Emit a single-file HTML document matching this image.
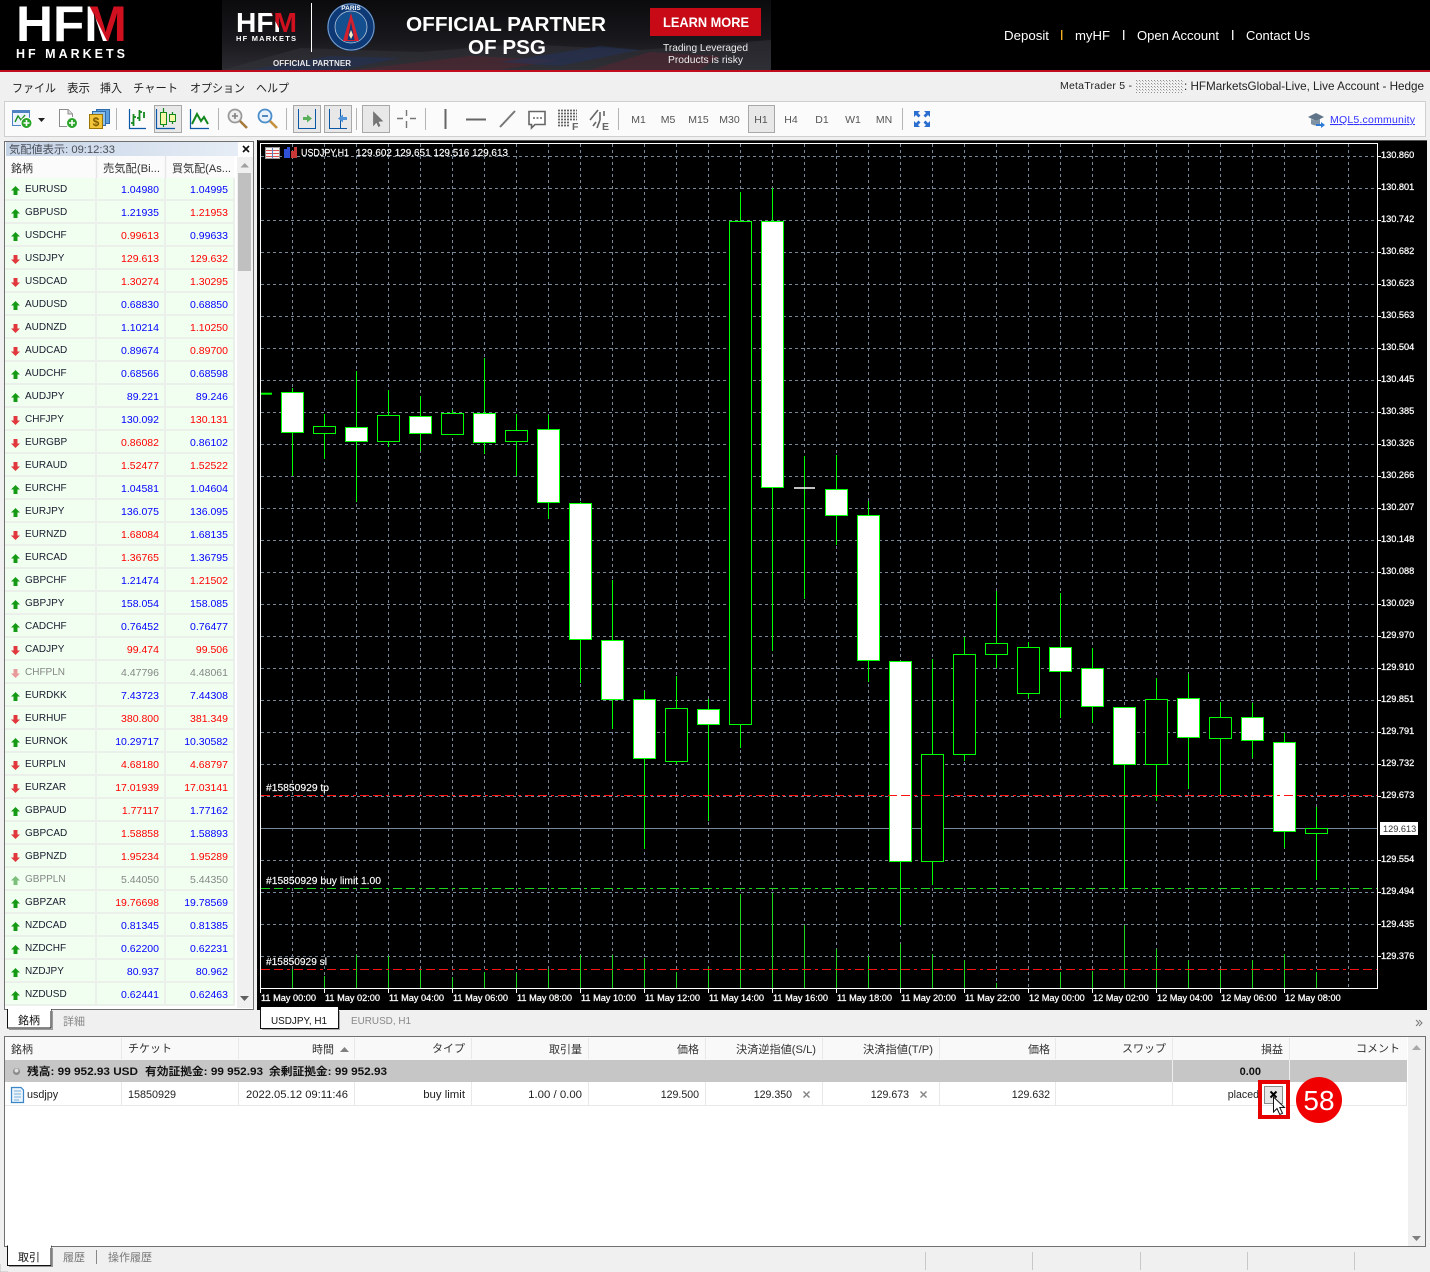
<!DOCTYPE html>
<html lang="ja"><head><meta charset="utf-8"><title>MetaTrader 5 WebTerminal</title>
<style>
html,body{margin:0;padding:0;background:#f0f0f0;width:1430px;height:1272px;overflow:hidden}
svg{position:absolute;left:0;top:0;display:block}
text{font-family:"Liberation Sans","Noto Sans CJK JP",sans-serif}
.nav{fill:#fff;font-size:13.3px}
.menu{fill:#222;font-size:11.5px}
.tf{fill:#555;font-size:10.5px;text-anchor:middle}
.px text{fill:#fff;font-size:9.2px;stroke:#fff;stroke-width:.25}
.px text.lb{font-size:10.3px;stroke-width:.15}
.hd{fill:#333;font-size:11px;text-anchor:end}
.rw{fill:#222;font-size:10.6px;text-anchor:end}
.w{fill:#fff;stroke:#0f0;stroke-width:1}
.b{fill:#000;stroke:#0f0;stroke-width:1}
#q{position:absolute;left:5px;top:178px;width:229px;border-collapse:collapse;table-layout:fixed;font:10.5px "Liberation Sans",sans-serif}
#q td{height:18px;padding:3px 5px 0 0;background:#f0fff0;border-bottom:2px solid #ebf0eb;border-right:2px solid #ebf0eb;text-align:right;white-space:nowrap;line-height:18px}
#q td:first-child{text-align:left;color:#1a1a2e;font-size:10px;padding-left:20px;position:relative}
#q i{position:absolute;left:6px;top:8px;width:9px;height:9px}
#q i.u{background:#149a14;clip-path:polygon(50% 0,100% 50%,72% 50%,72% 100%,28% 100%,28% 50%,0 50%)}
#q i.d{background:#e0383c;clip-path:polygon(28% 0,72% 0,72% 50%,100% 50%,50% 100%,0 50%,28% 50%)}
#q i.lu{background:#7bbf7b;clip-path:polygon(50% 0,100% 50%,72% 50%,72% 100%,28% 100%,28% 50%,0 50%)}
#q i.ld{background:#e89a9a;clip-path:polygon(28% 0,72% 0,72% 50%,100% 50%,50% 100%,0 50%,28% 50%)}
.B{color:#00f}.R{color:#f00}.G{color:#868686}
#q tr.g td:first-child{color:#868686}
</style></head><body>
<svg width="1430" height="1272" viewBox="0 0 1430 1272" xmlns="http://www.w3.org/2000/svg">
<defs>
<linearGradient id="lg" gradientUnits="userSpaceOnUse" x1="92" y1="26" x2="104" y2="20"><stop offset=".5" stop-color="#fff"/><stop offset=".5" stop-color="#d0101f"/></linearGradient>
<linearGradient id="lg2" gradientUnits="userSpaceOnUse" x1="273" y1="24" x2="279" y2="21"><stop offset=".5" stop-color="#fff"/><stop offset=".5" stop-color="#d0101f"/></linearGradient>
<linearGradient id="bn" x1="0" y1="0" x2="0" y2="1"><stop offset="0" stop-color="#0b0b0d"/><stop offset=".55" stop-color="#18181c"/><stop offset="1" stop-color="#2a2a30"/></linearGradient>
<linearGradient id="tb" x1="0" y1="0" x2="1" y2="0"><stop offset="0" stop-color="#c5d3e6"/><stop offset="1" stop-color="#e6edf6"/></linearGradient>
<pattern id="dot" width="3" height="3" patternUnits="userSpaceOnUse"><rect width="3" height="3" fill="#f2f2f2"/><rect width="1" height="1" fill="#bdbdbd"/><rect x="2" y="2" width="1" height="1" fill="#8f8f8f"/></pattern>
</defs>

<!-- header -->
<rect width="1430" height="70" fill="#000"/>
<rect y="70" width="1430" height="2" fill="#c00c1c"/>
<text x="16" y="41" font-size="50" font-weight="700" fill="url(#lg)" textLength="111" lengthAdjust="spacingAndGlyphs">HFM</text>
<text x="16" y="58" font-size="12.5" font-weight="700" fill="#fff" textLength="109">HF MARKETS</text>

<!-- banner -->
<rect x="222" width="549" height="70" fill="url(#bn)"/>
<path d="M222 70L300 48 420 52 520 44 640 50 771 40V70Z" fill="#34343c" opacity=".5"/>
<path d="M352 70L470 56 560 60 500 70ZM590 70L650 52 720 56 700 70Z" fill="#5a2430" opacity=".5"/>
<path d="M250 70L330 56 400 58 340 70ZM500 62L600 46 640 50 560 66Z" fill="#23335a" opacity=".55"/>
<text x="236" y="32" font-size="28" font-weight="700" fill="url(#lg2)" textLength="61" lengthAdjust="spacingAndGlyphs">HFM</text>
<text x="236" y="41" font-size="7.5" font-weight="700" fill="#fff" textLength="60">HF MARKETS</text>
<rect x="311" y="3" width="1" height="49" fill="#fff"/>
<circle cx="351" cy="27" r="24" fill="#0d3a76"/><circle cx="351" cy="27" r="23" fill="none" stroke="#7fa0c8" stroke-width="1"/><circle cx="351" cy="27" r="16" fill="#14508f" stroke="#c8d4e4" stroke-width=".7"/>
<path d="M351 13L343 41H359Z" fill="#d2202f"/>
<path d="M351 22L347.500 40H354.500Z" fill="#0d3a76"/><path d="M351 30l2 5-2 4-2-4Z" fill="#f3e9c6"/>
<text x="351" y="10" font-size="6.500" font-weight="700" fill="#fff" text-anchor="middle">PARIS</text>
<text x="312" y="66" font-size="8" font-weight="700" fill="#e8e8e8" text-anchor="middle" textLength="78">OFFICIAL PARTNER</text>
<text x="406" y="31" font-size="20" font-weight="700" fill="#fff" textLength="200" lengthAdjust="spacingAndGlyphs">OFFICIAL PARTNER</text>
<text x="468" y="54" font-size="20" font-weight="700" fill="#fff" textLength="78" lengthAdjust="spacingAndGlyphs">OF PSG</text>
<rect x="650" y="8" width="111" height="28" fill="#c80a17"/>
<text x="663" y="27" font-size="14" font-weight="700" fill="#fff" textLength="86" lengthAdjust="spacingAndGlyphs">LEARN MORE</text>
<text x="663" y="51" font-size="10.5" fill="#eee" textLength="85" lengthAdjust="spacingAndGlyphs">Trading Leveraged</text>
<text x="668" y="63" font-size="10.5" fill="#eee" textLength="75" lengthAdjust="spacingAndGlyphs">Products is risky</text>

<text x="1004" y="40" class="nav" textLength="45" lengthAdjust="spacingAndGlyphs">Deposit</text>
<rect x="1061" y="30" width="1.4" height="10" fill="#f0b020"/>
<text x="1075" y="40" class="nav" textLength="35" lengthAdjust="spacingAndGlyphs">myHF</text>
<rect x="1123" y="30" width="1.4" height="10" fill="#eee"/>
<text x="1137" y="40" class="nav" textLength="82" lengthAdjust="spacingAndGlyphs">Open Account</text>
<rect x="1232" y="30" width="1.4" height="10" fill="#eee"/>
<text x="1246" y="40" class="nav" textLength="64" lengthAdjust="spacingAndGlyphs">Contact Us</text>

<!-- menu -->
<text x="12" y="92" class="menu" textLength="44" lengthAdjust="spacingAndGlyphs">ファイル</text>
<text x="67" y="92" class="menu" textLength="23" lengthAdjust="spacingAndGlyphs">表示</text>
<text x="100" y="92" class="menu" textLength="22" lengthAdjust="spacingAndGlyphs">挿入</text>
<text x="133" y="92" class="menu" textLength="45" lengthAdjust="spacingAndGlyphs">チャート</text>
<text x="190" y="92" class="menu" textLength="55" lengthAdjust="spacingAndGlyphs">オプション</text>
<text x="256" y="92" class="menu" textLength="33" lengthAdjust="spacingAndGlyphs">ヘルプ</text>
<text x="1060" y="89" font-size="10.5" fill="#222" textLength="72">MetaTrader 5 -</text>
<rect x="1135" y="79" width="48" height="14" fill="url(#dot)"/>
<text x="1184" y="90" font-size="12" fill="#222" textLength="240" lengthAdjust="spacingAndGlyphs">: HFMarketsGlobal-Live, Live Account - Hedge</text>

<!-- toolbar -->
<rect x="4.5" y="101.5" width="1421" height="35" fill="#fbfbfb" stroke="#cfcfcf"/>
<g fill="#e8e8e8" stroke="#a8a8a8"><rect x="154.5" y="105.5" width="27" height="27"/><rect x="293.5" y="105.5" width="27" height="27"/><rect x="324.5" y="105.5" width="27" height="27"/><rect x="362.5" y="105.5" width="27" height="27"/><rect x="748.5" y="105.5" width="26" height="27"/></g>
<path d="M116.5 108V130M218.5 108V130M286.5 108V130M356.5 108V130M425.5 108V130M618.5 108V130M902.5 108V130" stroke="#b4b4b4"/>
<!-- new chart -->
<rect x="12.5" y="110.5" width="17" height="15" fill="#eef4ff" stroke="#4f82c2"/><rect x="12" y="110" width="18" height="3" fill="#4f82c2"/>
<path d="M15 122L18 116 21 120 25 115" fill="none" stroke="#1f8f1f" stroke-width="1.4"/>
<circle cx="26.5" cy="123" r="5.5" fill="#2aa52a" stroke="#fff"/><path d="M26.5 120V126M23.5 123H29.5" stroke="#fff" stroke-width="1.6"/>
<path d="M38 118H45L41.5 122Z" fill="#222"/>
<!-- new order -->
<path d="M59.5 109.5H68L72.5 114V126.5H59.5Z" fill="#fff" stroke="#8c8c8c"/><path d="M68 109.5V114H72.5" fill="#ddd" stroke="#8c8c8c"/>
<circle cx="72" cy="123" r="5.5" fill="#2aa52a" stroke="#fff"/><path d="M72 120V126M69 123H75" stroke="#fff" stroke-width="1.6"/>
<!-- dollar -->
<rect x="96.5" y="109.5" width="13" height="14" fill="#5f9fdc" stroke="#2e6cab"/><rect x="92.5" y="111.5" width="13" height="14" fill="#8fc1ea" stroke="#2e6cab"/>
<rect x="89.5" y="114.5" width="13" height="14" fill="#f2c53a" stroke="#9c7400"/><text x="96" y="126" font-size="12" font-weight="700" fill="#805c00" text-anchor="middle">$</text>
<!-- chart types -->
<g fill="none">
<path d="M129.5 109V128.5H146" stroke="#0a57a8" stroke-width="1.2"/>
<path d="M133.5 114V126M131 123H133.5M133.5 117H136M139.5 110V121M137 118H139.5M139.5 112H142M144 112V118" stroke="#12881d" stroke-width="1.8"/>
<path d="M156.5 109V128.5H175" stroke="#0a57a8" stroke-width="1.2"/>
<path d="M163.5 108V127M172.5 112V124" stroke="#12881d" stroke-width="1.2"/>
<rect x="160.5" y="112.5" width="6" height="12" fill="#f6f6a8" stroke="#12881d"/><rect x="169.5" y="114.5" width="6" height="7" fill="#f6f6a8" stroke="#12881d"/>
<path d="M190.5 109V128.5H209" stroke="#0a57a8" stroke-width="1.2"/>
<path d="M192 124L197 114 201 121 204 117 208 124" stroke="#12881d" stroke-width="2"/>
</g>
<!-- zoom -->
<circle cx="235" cy="116" r="6.5" fill="#f0f0f0" stroke="#9a9a9a" stroke-width="1.8"/><path d="M232 116H238M235 113V119" stroke="#808080" stroke-width="1.6"/><path d="M240 121L247 128" stroke="#a77b3c" stroke-width="2.6"/>
<circle cx="265" cy="116" r="6.5" fill="#eaf3fc" stroke="#4b8dcb" stroke-width="1.8"/><path d="M262 116H268" stroke="#2c6db0" stroke-width="1.6"/><path d="M270 121L277 128" stroke="#c4913f" stroke-width="2.6"/>
<!-- shift -->
<g fill="none" stroke="#0a57a8" stroke-width="1"><path d="M298.5 109V128.5H316"/><path d="M315.5 109V128"/><path d="M329.5 109V128.5H347"/><path d="M340.5 109V128"/></g>
<path d="M303 117H307V114.500L312 118.500 307 122.500V120H303Z" fill="#5ab05a"/>
<path d="M347 117H343V114.500L338 118.500 343 122.500V120H347Z" fill="#4f92d8"/>
<!-- cursor tools -->
<path d="M373.5 112V125.500L376.500 122 378.500 126.500 380 125.800 378 121.500 382.500 121Z" fill="#777" stroke="#666" stroke-width=".6"/>
<path d="M406.5 110V116M406.5 121V128M397 118.5H403M410 118.5H416" stroke="#777" stroke-width="1.4"/>
<path d="M445.5 109V129" stroke="#666" stroke-width="2"/>
<path d="M466 119.5H486" stroke="#666" stroke-width="2"/>
<path d="M500 127L515 111" stroke="#777" stroke-width="2"/>
<path d="M529 111.5H545V124.5H535L531.5 128V124.5H529Z" fill="#fff" stroke="#666" stroke-width="1.6"/><path d="M533 118H535M536.5 118H538.5M540 118H542" stroke="#666" stroke-width="1.6"/>
<path d="M558 110.5H577M558 113.5H577M558 116.5H577M558 119.5H577M558 122.500H570M558 125.5H570" stroke="#666" stroke-width="1.8" stroke-dasharray="2 1"/>
<text x="572" y="130" font-size="10.500" font-weight="700" fill="#666">F</text>
<path d="M590 120L598 110M593 126L596 122M600 112V120M604 111V116M600 120L597 128" stroke="#666" stroke-width="1.6" fill="none"/>
<text x="602" y="130" font-size="10.500" font-weight="700" fill="#666">E</text>
<!-- timeframes -->
<text x="638.5" y="123" class="tf">M1</text><text x="668" y="123" class="tf">M5</text><text x="698.5" y="123" class="tf">M15</text><text x="729.5" y="123" class="tf">M30</text><text x="761" y="123" class="tf">H1</text><text x="791" y="123" class="tf">H4</text><text x="822" y="123" class="tf">D1</text><text x="853" y="123" class="tf">W1</text><text x="884" y="123" class="tf">MN</text>
<path d="M914 111H920L918 113 920.5 115.5 918.5 117.5 916 115 914 117ZM930 111H924L926 113 923.5 115.5 925.5 117.5 928 115 930 117ZM914 127H920L918 125 920.5 122.5 918.5 120.5 916 123 914 121ZM930 127H924L926 125 923.5 122.5 925.5 120.5 928 123 930 121Z" fill="#2a6fd0"/>
<!-- mql5 -->
<path d="M1308 117L1316 113 1324 117 1316 121Z" fill="#5f7488"/><path d="M1311 119V124C1314 126 1318 126 1320 124V119L1316 121Z" fill="#8093a5"/>
<path d="M1316 124H1321V122L1325 125 1321 128V126H1316Z" fill="#2a7ad6"/>
<text x="1330" y="123" font-size="10.5" fill="#3232ff" text-decoration="underline" textLength="85">MQL5.community</text>

<!-- symbols panel -->
<rect x="4.5" y="141.5" width="249" height="868" fill="#fff" stroke="#707070"/>
<rect x="6" y="142" width="232" height="14" fill="url(#tb)"/>
<text x="9" y="153" font-size="11" fill="#4a4f58" textLength="106" lengthAdjust="spacingAndGlyphs">気配値表示: 09:12:33</text>
<path d="M243 146L249 152M249 146L243 152" stroke="#111" stroke-width="1.6"/>
<rect x="5" y="156" width="229" height="22" fill="#fbfbfb"/>
<path d="M96.5 156V178M165.5 156V178" stroke="#e6e6e6" stroke-width="1.4"/>
<text x="11" y="172" font-size="11" fill="#333">銘柄</text>
<text x="103" y="172" font-size="11" fill="#333" textLength="57" lengthAdjust="spacingAndGlyphs">売気配(Bi...</text>
<text x="172" y="172" font-size="11" fill="#333" textLength="59" lengthAdjust="spacingAndGlyphs">買気配(As...</text>
<rect x="237" y="157" width="16" height="851" fill="#f0f0f0"/>
<rect x="238" y="173" width="13" height="98" fill="#c0c0c0"/>
<path d="M240.500 167.500H249L244.750 163Z" fill="#a0a0a0"/>
<path d="M240 996H249L244.500 1001Z" fill="#606060"/>

<!-- tabs under panels -->
<rect x="7.500" y="1009.500" width="43.500" height="18.500" fill="#fff" stroke="#111"/><rect x="8" y="1008" width="43" height="3" fill="#fff"/><path d="M9 1029.500H52.500V1011" stroke="#999" fill="none"/>
<text x="18" y="1024" font-size="11" fill="#111">銘柄</text>
<text x="63" y="1025" font-size="11" fill="#888">詳細</text>

<!-- chart -->
<rect x="257" y="140" width="1170" height="870" fill="#000"/>
<path d="M258 140.500H1427" stroke="#555"/>
<g fill="none" stroke="#778899" stroke-dasharray="3 3">
<path d="M261 156.500H1377M261 188.500H1377M261 220.500H1377M261 252.500H1377M261 284.500H1377M261 316.500H1377M261 348.500H1377M261 380.500H1377M261 412.500H1377M261 444.500H1377M261 476.500H1377M261 508.500H1377M261 540.500H1377M261 572.500H1377M261 604.500H1377M261 636.500H1377M261 668.500H1377M261 700.500H1377M261 732.500H1377M261 764.500H1377M261 796.500H1377M261 860.500H1377M261 892.500H1377M261 924.500H1377M261 956.500H1377"/>
<path d="M292.500 144V988M324.500 144V988M356.500 144V988M388.500 144V988M420.500 144V988M452.500 144V988M484.500 144V988M516.500 144V988M548.500 144V988M580.500 144V988M612.500 144V988M644.500 144V988M676.500 144V988M708.500 144V988M740.500 144V988M772.500 144V988M804.500 144V988M836.500 144V988M868.500 144V988M900.500 144V988M932.500 144V988M964.500 144V988M996.500 144V988M1028.500 144V988M1060.500 144V988M1092.500 144V988M1124.500 144V988M1156.500 144V988M1188.500 144V988M1220.500 144V988M1252.500 144V988M1284.500 144V988M1316.500 144V988M1348.500 144V988"/>
</g>
<path d="M261 828.500H1378" stroke="#778899"/>
<!-- stubs -->
<path d="M292.500 969V988M324.500 976V988M356.500 955V988M388.500 956V988M420.500 969V988M452.500 977V988M484.500 972V988M516.500 973V988M548.500 969V988M580.500 955V988M612.500 955V988M644.500 958V988M676.500 972V988M708.500 967V988M740.500 894V988M772.500 893V988M804.500 925V988M836.500 949V988M868.500 956V988M900.500 944V988M932.500 954V988M964.500 960V988M996.500 983V988M1060.500 972V988M1092.500 971V988M1124.500 925V988M1156.500 949V988M1188.500 960V988M1220.500 970V988M1252.500 960V988M1284.500 954V988M1316.500 972V988" stroke="#1fd61f"/>
<!-- wicks -->
<path d="M292.500 388V476M324.500 414V459M356.500 371V502M388.500 390V447M420.500 396V451M452.500 410V434M484.500 358V454M516.500 414V476M548.500 415V519M580.500 502V683M612.500 580V729M644.500 691V849M676.500 676V764M708.500 699V821M740.500 192V748M772.500 188V651M804.500 456V599M836.500 455V545M868.500 501V682M900.500 661V925M932.500 659V885M964.500 637V761M996.500 591V668M1028.500 642V698M1060.500 593V718M1092.500 648V723M1124.500 707V889M1156.500 678V801M1188.500 674V789M1220.500 702V794M1252.500 703V758M1284.500 733V848M1316.500 807V880" stroke="#0f0"/>
<!-- bodies -->
<path class="w" d="M281.500 392.500h22v40h-22zM345.500 427.500h22v14h-22zM409.500 416.500h22v17h-22zM473.500 413.500h22v29h-22zM537.500 429.500h22v73h-22zM569.500 503.500h22v136h-22zM601.500 640.500h22v59h-22zM633.500 699.500h22v59h-22zM697.500 709.500h22v15h-22zM761.500 221.500h22v266h-22zM825.500 489.500h22v26h-22zM857.500 515.500h22v145h-22zM889.500 661.500h22v200h-22zM1049.500 647.500h22v24h-22zM1081.500 668.500h22v38h-22zM1113.500 707.500h22v57h-22zM1177.500 698.500h22v39h-22zM1241.500 717.500h22v23h-22zM1273.500 742.500h22v89h-22z"/>
<path class="b" d="M313.500 426.500h22v7h-22zM377.500 415.500h22v26h-22zM441.500 413.500h22v21h-22zM505.500 430.500h22v11h-22zM665.500 708.500h22v53h-22zM729.500 221.500h22v503h-22zM921.500 754.500h22v107h-22zM953.500 654.500h22v100h-22zM985.500 643.500h22v11h-22zM1017.500 647.500h22v46h-22zM1145.500 699.500h22v65h-22zM1209.500 717.500h22v21h-22zM1305.500 828.500h22v5h-22z"/>
<path d="M794 488H815" stroke="#fff" stroke-width="1.6"/>
<path d="M261 393.700H272" stroke="#0f0" stroke-width="2"/>
<!-- order lines -->
<g fill="none" stroke-dasharray="9 4 9 4 3 4">
<path d="M261 795.500H1377" stroke="#f11"/>
<path d="M261 888.500H1377" stroke="#1fd61f"/>
<path d="M261 969.500H1377" stroke="#f11"/>
</g>
<!-- frame -->
<path d="M260.500 143.500H1377.500V988.500H260.500Z" fill="none" stroke="#fff"/>
<path d="M1378 156.500h3M1378 188.500h3M1378 220.500h3M1378 252.500h3M1378 284.500h3M1378 316.500h3M1378 348.500h3M1378 380.500h3M1378 412.500h3M1378 444.500h3M1378 476.500h3M1378 508.500h3M1378 540.500h3M1378 572.500h3M1378 604.500h3M1378 636.500h3M1378 668.500h3M1378 700.500h3M1378 732.500h3M1378 764.500h3M1378 796.500h3M1378 860.500h3M1378 892.500h3M1378 924.500h3M1378 956.500h3M260.500 989v4M324.500 989v4M388.500 989v4M452.500 989v4M516.500 989v4M580.500 989v4M644.500 989v4M708.500 989v4M772.500 989v4M836.500 989v4M900.500 989v4M964.500 989v4M1028.500 989v4M1092.500 989v4M1156.500 989v4M1220.500 989v4M1284.500 989v4" stroke="#fff"/>
<!-- chart title -->
<rect x="265.500" y="147.500" width="14" height="11" fill="#f4f4f4" stroke="#999"/><path d="M266 150.500H279M266 153.500H279M266 156.500H279" stroke="#e05050"/><path d="M272.500 148V158" stroke="#5a7ec0"/>
<path d="M284 149h3v-2h3v11h-6z" fill="#3050d8"/><path d="M291 151h3v-4h3v11h-6z" fill="#c83838"/>
<g class="px">
<text class="lb" x="301" y="156" textLength="48" lengthAdjust="spacingAndGlyphs">USDJPY,H1</text>
<text class="lb" x="356" y="156" textLength="152" lengthAdjust="spacingAndGlyphs">129.602 129.651 129.516 129.613</text>
<text class="lb" x="266" y="791" textLength="63" lengthAdjust="spacingAndGlyphs">#15850929 tp</text>
<text class="lb" x="266" y="884" textLength="115" lengthAdjust="spacingAndGlyphs">#15850929 buy limit 1.00</text>
<text class="lb" x="266" y="965" textLength="61" lengthAdjust="spacingAndGlyphs">#15850929 sl</text>
<text x="1381" y="158">130.860</text><text x="1381" y="190">130.801</text><text x="1381" y="222">130.742</text><text x="1381" y="254">130.682</text><text x="1381" y="286">130.623</text><text x="1381" y="318">130.563</text><text x="1381" y="350">130.504</text><text x="1381" y="382">130.445</text><text x="1381" y="414">130.385</text><text x="1381" y="446">130.326</text><text x="1381" y="478">130.266</text><text x="1381" y="510">130.207</text><text x="1381" y="542">130.148</text><text x="1381" y="574">130.088</text><text x="1381" y="606">130.029</text><text x="1381" y="638">129.970</text><text x="1381" y="670">129.910</text><text x="1381" y="702">129.851</text><text x="1381" y="734">129.791</text><text x="1381" y="766">129.732</text><text x="1381" y="798">129.673</text><text x="1381" y="862">129.554</text><text x="1381" y="894">129.494</text><text x="1381" y="927">129.435</text><text x="1381" y="959">129.376</text>
<text x="261" y="1001">11 May 00:00</text><text x="325" y="1001">11 May 02:00</text><text x="389" y="1001">11 May 04:00</text><text x="453" y="1001">11 May 06:00</text><text x="517" y="1001">11 May 08:00</text><text x="581" y="1001">11 May 10:00</text><text x="645" y="1001">11 May 12:00</text><text x="709" y="1001">11 May 14:00</text><text x="773" y="1001">11 May 16:00</text><text x="837" y="1001">11 May 18:00</text><text x="901" y="1001">11 May 20:00</text><text x="965" y="1001">11 May 22:00</text><text x="1029" y="1001">12 May 00:00</text><text x="1093" y="1001">12 May 02:00</text><text x="1157" y="1001">12 May 04:00</text><text x="1221" y="1001">12 May 06:00</text><text x="1285" y="1001">12 May 08:00</text>
</g>
<rect x="1380" y="822" width="38" height="13" fill="#fff"/>
<text x="1383" y="832" font-size="9.2" fill="#333">129.613</text>

<!-- chart tabs -->
<rect x="260.500" y="1009" width="78" height="19.500" fill="#fff" stroke="#111"/><rect x="261" y="1007" width="77" height="3" fill="#fff"/>
<path d="M262 1029.500H339.500V1011" stroke="#aaa" fill="none"/>
<rect x="257" y="1008" width="3" height="2" fill="#000"/><rect x="339" y="1008" width="88" height="2" fill="#000"/>
<text x="271" y="1024" font-size="10.5" fill="#111" textLength="56" lengthAdjust="spacingAndGlyphs">USDJPY, H1</text>
<text x="351" y="1024" font-size="10.5" fill="#888" textLength="60" lengthAdjust="spacingAndGlyphs">EURUSD, H1</text>
<path d="M1416 1020l3 3-3 3M1419 1020l3 3-3 3" fill="none" stroke="#777"/>

<!-- bottom panel -->
<rect x="4.500" y="1036.500" width="1421" height="210" fill="#fff" stroke="#707070"/>
<rect x="5" y="1037" width="1402" height="23" fill="#f9f9f9"/>
<rect x="5" y="1060" width="1402" height="22" fill="#c6c6c6"/>
<rect x="1408" y="1037" width="17" height="209" fill="#f0f0f0"/>
<path d="M121.500 1038V1059M238.500 1038V1059M354.500 1038V1059M471.500 1038V1059M588.500 1038V1059M705.500 1038V1059M822.500 1038V1059M939.500 1038V1059M1055.500 1038V1059M1172.500 1038V1105M1289.500 1038V1105M121.500 1082V1105M238.500 1082V1105M354.500 1082V1105M471.500 1082V1105M588.500 1082V1105M705.500 1082V1105M822.500 1082V1105M939.500 1082V1105M1055.500 1082V1105M1406.500 1082V1105M5 1105.500H1407" stroke="#e8e8e8"/>
<path d="M1172.500 1060V1082M1289.500 1060V1082" stroke="#eee"/>
<text x="11" y="1053" font-size="11" fill="#333">銘柄</text>
<text x="128" y="1052" font-size="11" fill="#333" textLength="44" lengthAdjust="spacingAndGlyphs">チケット</text>
<text x="334" y="1053" class="hd">時間</text>
<path d="M340 1052H349L344.500 1047Z" fill="#808080"/>
<text x="465" y="1052" class="hd">タイプ</text>
<text x="582" y="1053" class="hd">取引量</text>
<text x="699" y="1053" class="hd">価格</text>
<text x="816" y="1053" class="hd" textLength="80" lengthAdjust="spacingAndGlyphs">決済逆指値(S/L)</text>
<text x="933" y="1053" class="hd" textLength="70" lengthAdjust="spacingAndGlyphs">決済指値(T/P)</text>
<text x="1050" y="1053" class="hd">価格</text>
<text x="1166" y="1052" class="hd">スワップ</text>
<text x="1283" y="1053" class="hd">損益</text>
<text x="1400" y="1052" class="hd">コメント</text>
<circle cx="16.500" cy="1071.500" r="3.500" fill="#8a8a8a"/><circle cx="16.500" cy="1070.500" r="2" fill="#e0e0e0"/>
<g font-size="11" font-weight="700" fill="#111">
<text x="27" y="1075" textLength="111" lengthAdjust="spacingAndGlyphs">残高: 99 952.93 USD</text>
<text x="145" y="1075" textLength="118" lengthAdjust="spacingAndGlyphs">有効証拠金: 99 952.93</text>
<text x="269" y="1075" textLength="118" lengthAdjust="spacingAndGlyphs">余剰証拠金: 99 952.93</text>
<text x="1261" y="1075" text-anchor="end">0.00</text>
</g>
<path d="M11.500 1087.500H21L23.500 1090V1102.500H11.500Z" fill="#e9f3fb" stroke="#3a86c8" stroke-width="1.2"/>
<path d="M14 1091H21M14 1094H21M14 1097H21M14 1100H19" stroke="#7ab0dc"/>
<text x="27" y="1098" font-size="10.8" fill="#222">usdjpy</text>
<text x="128" y="1098" font-size="10.8" fill="#222">15850929</text>
<text x="348" y="1098" class="rw" textLength="102" lengthAdjust="spacingAndGlyphs">2022.05.12 09:11:46</text>
<text x="465" y="1098" class="rw" style="font-size:11.4px">buy limit</text>
<text x="582" y="1098" class="rw" style="font-size:11.4px">1.00 / 0.00</text>
<text x="699" y="1098" class="rw">129.500</text>
<text x="792" y="1098" class="rw">129.350</text>
<path d="M803.500 1091.500L809.500 1097.500M809.500 1091.500L803.500 1097.500" stroke="#888" stroke-width="1.5"/>
<text x="909" y="1098" class="rw">129.673</text>
<path d="M920.500 1091.500L926.500 1097.500M926.500 1091.500L920.500 1097.500" stroke="#888" stroke-width="1.5"/>
<text x="1050" y="1098" class="rw">129.632</text>
<text x="1259" y="1098" class="rw">placed</text>
<path d="M1412 1050H1421L1416.500 1045Z" fill="#a8a8a8"/>
<path d="M1412 1236H1421L1416.500 1241Z" fill="#808080"/>
<!-- close button + highlight -->
<rect x="1264.500" y="1086.500" width="18" height="17" fill="#e6e6e6" stroke="#8a8a8a"/>
<path d="M1270.500 1091.500L1276.500 1097.500M1276.500 1091.500L1270.500 1097.500" stroke="#000" stroke-width="2"/>
<rect x="1260" y="1082" width="28" height="35" fill="none" stroke="#e60000" stroke-width="4"/>
<path d="M1273.500 1097V1112L1277 1108.500 1279.800 1114.500 1282.500 1113.300 1279.800 1107.500 1284.500 1107.500Z" fill="#fff" stroke="#111"/>
<circle cx="1319" cy="1100" r="23" fill="#f00000"/>
<text x="1319" y="1110" font-size="28" fill="#fff" text-anchor="middle">58</text>

<!-- bottom tabs -->
<rect x="7.500" y="1246" width="43.500" height="19.500" fill="#fff" stroke="#111"/><rect x="8" y="1245" width="43" height="3" fill="#fff"/><path d="M9 1266.500H52.500V1248" stroke="#999" fill="none"/>
<text x="18" y="1261" font-size="11" fill="#111">取引</text>
<text x="63" y="1261" font-size="11" fill="#777">履歴</text>
<path d="M96.500 1250V1264" stroke="#888"/>
<text x="108" y="1261" font-size="11" fill="#777">操作履歴</text>
<path d="M925.500 1252V1270M1032.500 1252V1270M1140.500 1252V1270M1247.500 1252V1270M1354.500 1252V1270" stroke="#c8c8c8"/>
<path d="M0 1264V1272H8" fill="none" stroke="#bbb"/>
</svg>

<table id="q"><colgroup><col style="width:91px"><col style="width:69px"><col style="width:69px"></colgroup>
<tr><td><i class="u"></i>EURUSD</td><td class="B">1.04980</td><td class="B">1.04995</td></tr>
<tr><td><i class="u"></i>GBPUSD</td><td class="B">1.21935</td><td class="R">1.21953</td></tr>
<tr><td><i class="u"></i>USDCHF</td><td class="R">0.99613</td><td class="B">0.99633</td></tr>
<tr><td><i class="d"></i>USDJPY</td><td class="R">129.613</td><td class="R">129.632</td></tr>
<tr><td><i class="d"></i>USDCAD</td><td class="R">1.30274</td><td class="R">1.30295</td></tr>
<tr><td><i class="u"></i>AUDUSD</td><td class="B">0.68830</td><td class="B">0.68850</td></tr>
<tr><td><i class="d"></i>AUDNZD</td><td class="B">1.10214</td><td class="R">1.10250</td></tr>
<tr><td><i class="d"></i>AUDCAD</td><td class="B">0.89674</td><td class="R">0.89700</td></tr>
<tr><td><i class="u"></i>AUDCHF</td><td class="B">0.68566</td><td class="B">0.68598</td></tr>
<tr><td><i class="u"></i>AUDJPY</td><td class="B">89.221</td><td class="B">89.246</td></tr>
<tr><td><i class="d"></i>CHFJPY</td><td class="B">130.092</td><td class="R">130.131</td></tr>
<tr><td><i class="d"></i>EURGBP</td><td class="R">0.86082</td><td class="B">0.86102</td></tr>
<tr><td><i class="d"></i>EURAUD</td><td class="R">1.52477</td><td class="R">1.52522</td></tr>
<tr><td><i class="u"></i>EURCHF</td><td class="B">1.04581</td><td class="B">1.04604</td></tr>
<tr><td><i class="u"></i>EURJPY</td><td class="B">136.075</td><td class="B">136.095</td></tr>
<tr><td><i class="d"></i>EURNZD</td><td class="R">1.68084</td><td class="B">1.68135</td></tr>
<tr><td><i class="u"></i>EURCAD</td><td class="R">1.36765</td><td class="B">1.36795</td></tr>
<tr><td><i class="u"></i>GBPCHF</td><td class="B">1.21474</td><td class="R">1.21502</td></tr>
<tr><td><i class="u"></i>GBPJPY</td><td class="B">158.054</td><td class="B">158.085</td></tr>
<tr><td><i class="u"></i>CADCHF</td><td class="B">0.76452</td><td class="B">0.76477</td></tr>
<tr><td><i class="d"></i>CADJPY</td><td class="R">99.474</td><td class="R">99.506</td></tr>
<tr class="g"><td><i class="ld"></i>CHFPLN</td><td class="G">4.47796</td><td class="G">4.48061</td></tr>
<tr><td><i class="u"></i>EURDKK</td><td class="B">7.43723</td><td class="B">7.44308</td></tr>
<tr><td><i class="d"></i>EURHUF</td><td class="R">380.800</td><td class="R">381.349</td></tr>
<tr><td><i class="u"></i>EURNOK</td><td class="B">10.29717</td><td class="B">10.30582</td></tr>
<tr><td><i class="d"></i>EURPLN</td><td class="R">4.68180</td><td class="R">4.68797</td></tr>
<tr><td><i class="d"></i>EURZAR</td><td class="R">17.01939</td><td class="R">17.03141</td></tr>
<tr><td><i class="u"></i>GBPAUD</td><td class="R">1.77117</td><td class="B">1.77162</td></tr>
<tr><td><i class="d"></i>GBPCAD</td><td class="R">1.58858</td><td class="B">1.58893</td></tr>
<tr><td><i class="d"></i>GBPNZD</td><td class="R">1.95234</td><td class="R">1.95289</td></tr>
<tr class="g"><td><i class="lu"></i>GBPPLN</td><td class="G">5.44050</td><td class="G">5.44350</td></tr>
<tr><td><i class="u"></i>GBPZAR</td><td class="R">19.76698</td><td class="B">19.78569</td></tr>
<tr><td><i class="u"></i>NZDCAD</td><td class="B">0.81345</td><td class="B">0.81385</td></tr>
<tr><td><i class="u"></i>NZDCHF</td><td class="B">0.62200</td><td class="B">0.62231</td></tr>
<tr><td><i class="u"></i>NZDJPY</td><td class="B">80.937</td><td class="B">80.962</td></tr>
<tr><td><i class="u"></i>NZDUSD</td><td class="B">0.62441</td><td class="B">0.62463</td></tr>
</table>
</body></html>
